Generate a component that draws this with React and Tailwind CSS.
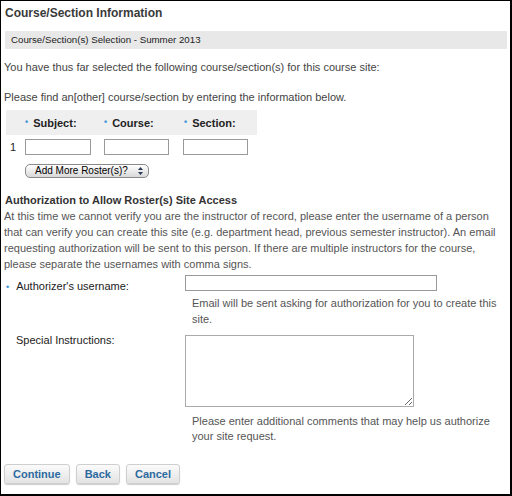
const dot = <span className="text-[#3d95d6] text-[9px] leading-none">•</span>

export default function App() {
  return (
    <div className="w-[512px] h-[496px] bg-black pl-[1px] pt-[1px] pr-[2px] pb-[2px]" style={{ fontFamily: '"Liberation Sans", Arial, sans-serif' }}>
      <div className="w-full h-full bg-white text-[#444] text-[11px] leading-[16px] px-[3px] pt-[4px] flex flex-col">
        <h2 className="h-[16px] text-[12px] font-bold text-[#3a3a3a] leading-[16px] ml-[1px]">Course/Section Information</h2>
        <div className="mt-[10px] ml-[1px] bg-[#e8e8e8] h-[18px] flex items-center px-[6px] text-[9.7px] text-[#222]">
          Course/Section(s) Selection - Summer 2013
        </div>
        <p className="mt-[10px] h-[16px]">You have thus far selected the following course/section(s) for this course site:</p>
        <p className="mt-[14px] h-[16px]">Please find an[other] course/section by entering the information below.</p>

        <div className="mt-[5px] ml-[2px] w-[251px] bg-[#efefef] h-[25px] flex items-center font-bold text-[11px] text-[#222]">
          <span className="ml-[19px] w-[79px] flex items-center gap-[5px]">{dot}Subject:</span>
          <span className="w-[80px] flex items-center gap-[5px]">{dot}Course:</span>
          <span className="flex items-center gap-[5px]">{dot}Section:</span>
        </div>
        <div className="mt-[4px] flex items-center h-[16px]">
          <span className="w-[21px] pl-[6px] text-[#222]">1</span>
          <input className="w-[66px] h-[16px] border border-[#9a9a9a] bg-white" />
          <input className="ml-[13px] w-[65px] h-[16px] border border-[#9a9a9a] bg-white" />
          <input className="ml-[14px] w-[65px] h-[16px] border border-[#9a9a9a] bg-white" />
        </div>
        <div className="mt-[9px] ml-[21px] w-[124px] h-[14px] rounded-[5px] border border-[#8a8a8a] bg-gradient-to-b from-white to-[#d8d8d8] flex items-center justify-between pl-[9px] pr-[4px] text-[10px] leading-[12px] text-black">
          <span>Add More Roster(s)?</span>
          <svg width="7" height="10" viewBox="0 0 7 10"><path d="M1 4 L3.5 1 L6 4 Z M1 6 L3.5 9 L6 6 Z" fill="#2a3a55" /></svg>
        </div>

        <h3 className="mt-[14px] h-[16px] ml-[1px] font-bold text-[11px] text-[#333]">Authorization to Allow Roster(s) Site Access</h3>
        <p className="text-[#555]">
          At this time we cannot verify you are the instructor of record, please enter the username of a person<br />
          that can verify you can create this site (e.g. department head, previous semester instructor). An email<br />
          requesting authorization will be sent to this person. If there are multiple instructors for the course,<br />
          please separate the usernames with comma signs.
        </p>

        <div className="mt-[3px] flex items-end">
          <div className="w-[181px] flex items-center gap-[7px] h-[16px] text-[#222] translate-y-[3px]">
            <span className="ml-[2px]">{dot}</span>
            Authorizer's username:
          </div>
          <input className="w-[252px] h-[16px] border border-[#9a9a9a] bg-white" />
        </div>
        <p className="mt-[4px] ml-[188px] text-[#555]">Email will be sent asking for authorization for you to create this<br />site.</p>

        <div className="mt-[5px] flex items-start">
          <div className="w-[181px] pl-[12px] text-[#222]">Special Instructions:</div>
          <textarea className="mt-[3px] w-[229px] h-[72px] border border-[#aaa] bg-white resize" />
        </div>
        <p className="mt-[7px] ml-[188px] leading-[15px] text-[#555]">Please enter additional comments that may help us authorize<br />your site request.</p>

        <div className="mt-[20px] flex gap-[6px]">
          {["Continue", "Back", "Cancel"].map((b) => (
            <button key={b} className="h-[20px] px-[8px] rounded-[3px] border border-[#cfcfcf] bg-gradient-to-b from-[#fbfbfb] to-[#e3e3e3] text-[#2d6aa0] font-bold text-[11px] leading-[18px] shadow-[0_1px_1px_rgba(0,0,0,0.2)]">
              {b}
            </button>
          ))}
        </div>
      </div>
    </div>
  )
}
